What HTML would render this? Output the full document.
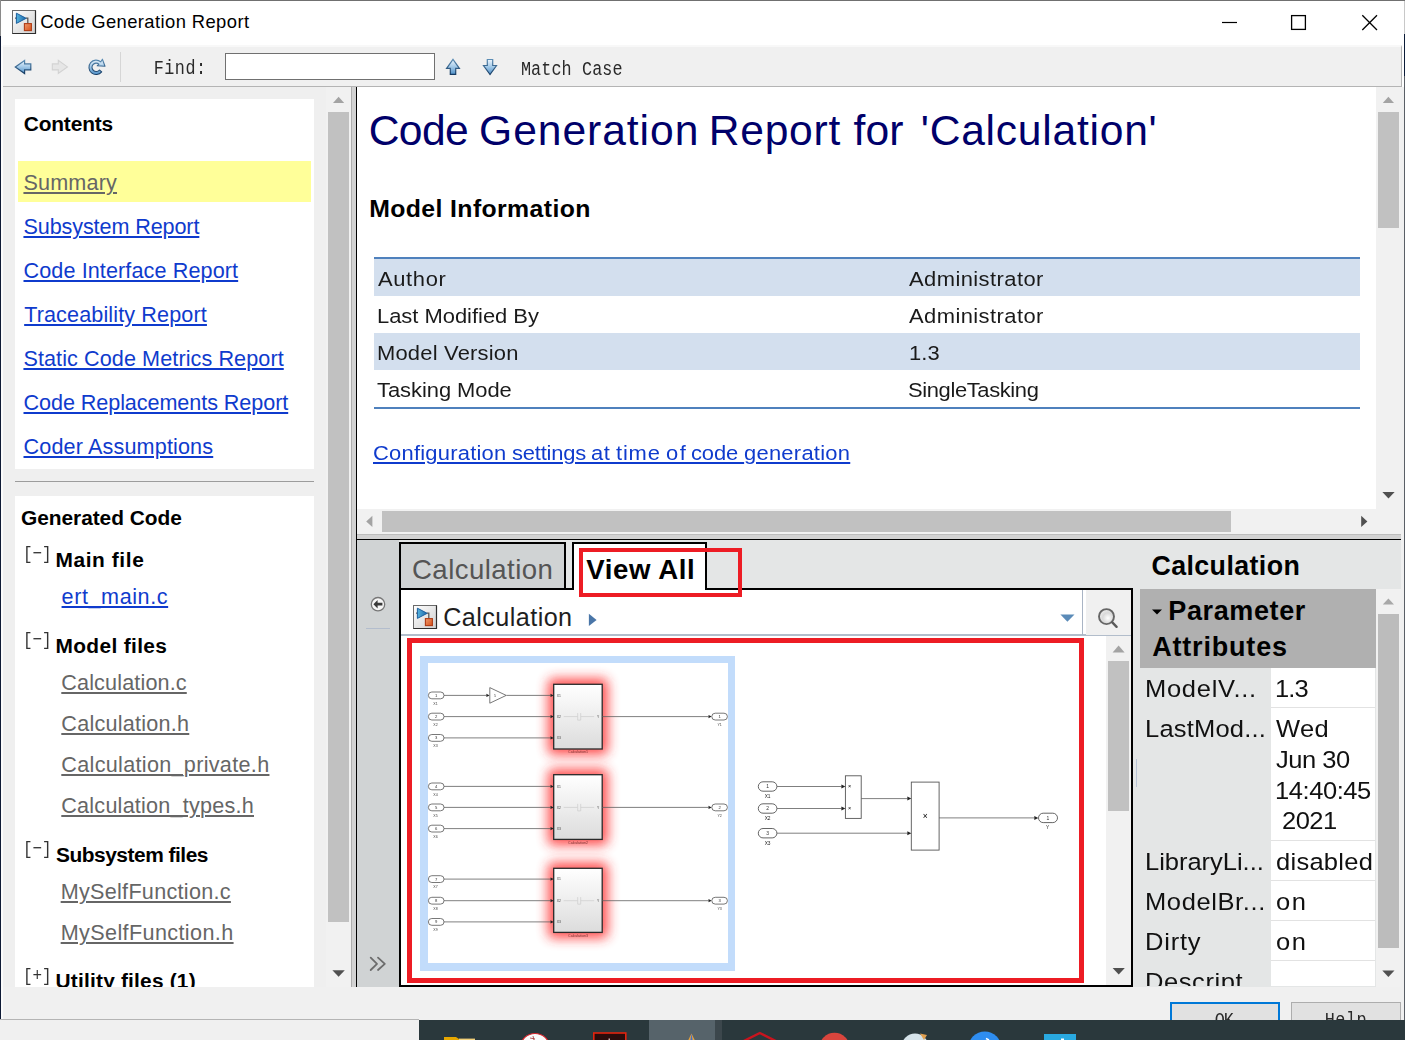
<!DOCTYPE html>
<html><head><meta charset="utf-8"><title>Code Generation Report</title>
<style>
*{box-sizing:border-box;margin:0;padding:0}
html,body{width:1405px;height:1040px;overflow:hidden;background:#f0f0f0;font-family:"Liberation Sans",sans-serif;}
.a{position:absolute}
.t{position:absolute;white-space:nowrap}
.clip{position:absolute;left:0;top:0;width:1405px;overflow:hidden}
svg{position:absolute;overflow:visible}
</style></head><body>
<!-- ===== window frame / title bar ===== -->
<div class="a" style="left:1px;top:1px;width:1403px;height:45px;background:#fff"></div>
<div class="a" style="left:0;top:0;width:1405px;height:1px;background:#707070"></div>
<div class="a" style="left:0;top:0;width:1px;height:36px;background:#8a8a8a"></div>
<div class="a" style="left:0;top:36px;width:1px;height:984px;background:#0e1a35"></div>
<div class="a" style="left:1px;top:46px;width:2px;height:973px;background:#fbfbfb"></div>
<div class="a" style="left:1401px;top:46px;width:3px;height:41px;background:#fff"></div>
<div class="a" style="left:1401px;top:87px;width:3px;height:933px;background:#f0f0f0"></div>
<div class="a" style="left:1404px;top:1px;width:1px;height:1019px;background:#5a5f66"></div>
<div class="a" style="left:1404px;top:1px;width:1px;height:33px;background:#c8c8c8"></div>
<div class="a" style="left:1404px;top:34px;width:1px;height:42px;background:#0c1c38"></div>
<svg width="0" height="0" style="left:0;top:0"><defs>
<linearGradient id="gblue" x1="0" y1="0" x2="0" y2="1"><stop offset="0" stop-color="#eef6fd"/><stop offset="0.45" stop-color="#a9cdea"/><stop offset="1" stop-color="#4f90c8"/></linearGradient>
<linearGradient id="gblueo" x1="0" y1="0" x2="0" y2="1"><stop offset="0" stop-color="#5b8db5"/><stop offset="1" stop-color="#153b63"/></linearGradient>
<linearGradient id="gicon" x1="0" y1="0" x2="1" y2="1"><stop offset="0" stop-color="#ffffff"/><stop offset="1" stop-color="#cfcfcf"/></linearGradient>
<linearGradient id="gtri" x1="0" y1="0" x2="1" y2="0"><stop offset="0" stop-color="#56b4de"/><stop offset="1" stop-color="#1c67a8"/></linearGradient>
<linearGradient id="gora" x1="0" y1="0" x2="1" y2="1"><stop offset="0" stop-color="#ee9a6c"/><stop offset="1" stop-color="#d9501a"/></linearGradient>
<linearGradient id="gblk" x1="0" y1="0" x2="0" y2="1"><stop offset="0" stop-color="#ffffff"/><stop offset="1" stop-color="#dcdcdc"/></linearGradient>
<radialGradient id="glens" cx="0.6" cy="0.6" r="0.7"><stop offset="0" stop-color="#ffffff"/><stop offset="0.5" stop-color="#d9d9d9"/><stop offset="1" stop-color="#f4f4f4"/></radialGradient>
<filter id="blur1" x="-20%" y="-20%" width="140%" height="140%"><feGaussianBlur stdDeviation="0.45"/></filter>
<filter id="blur2" x="-20%" y="-20%" width="140%" height="140%"><feGaussianBlur stdDeviation="0.6"/></filter>
<filter id="glow" x="-50%" y="-50%" width="200%" height="200%"><feGaussianBlur stdDeviation="5.6"/></filter>
</defs></svg><svg style="left:12px;top:10px" width="24" height="24" viewBox="0 0 24 24">
<rect x="0.5" y="0.5" width="23" height="23" fill="url(#gicon)" stroke="#6a6a6a"/>
<path d="M0.5 23.5H23.5V0.5" fill="none" stroke="#2e2e2e" stroke-width="1.2"/>
<path d="M3 8.2H5M14 8.2H15.8V13.5" fill="none" stroke="#5a5a5a" stroke-width="1.3"/>
<polygon points="4.4,3.2 4.4,13.4 14.2,8.3" fill="url(#gtri)" stroke="#1b5f9e" stroke-width="1" stroke-linejoin="round"/>
<rect x="12.4" y="13.6" width="7" height="7" fill="url(#gora)" stroke="#b03c16" stroke-width="1.1"/>
</svg>
<svg style="left:1215px;top:8px" width="170" height="30" viewBox="1215 8 170 30">
<path d="M1222 22.5H1237" stroke="#000" stroke-width="1.2" fill="none"/>
<rect x="1291.6" y="15.6" width="13.8" height="13.8" stroke="#000" stroke-width="1.3" fill="none"/>
<path d="M1362.3 15.3L1377 30M1377 15.3L1362.3 30" stroke="#000" stroke-width="1.3" fill="none"/>
</svg>
<!-- ===== toolbar ===== -->
<div class="a" style="left:3px;top:45px;width:1399px;height:42px;background:#f0f0f0;border-top:2px solid #f8f8f8;border-bottom:1px solid #b4b4b4;border-right:1px solid #b4b4b4"></div>
<div class="a" style="left:120px;top:52px;width:1px;height:30px;background:#d6d6d6"></div>
<div class="a" style="left:225px;top:53px;width:210px;height:27px;background:#fff;border:1px solid #707070"></div>
<svg style="left:10px;top:52px" width="500" height="30" viewBox="10 52 500 30">
<polygon points="15.3,66.9 24.6,60.4 24.6,63.9 30.8,63.9 30.8,69.9 24.6,69.9 24.6,73.5" fill="url(#gblue)" stroke="url(#gblueo)" stroke-width="1.2" stroke-linejoin="miter"/>
<polygon points="67.4,66.9 58.3,60.4 58.3,63.9 52.3,63.9 52.3,69.9 58.3,69.9 58.3,73.5" fill="#e6e6e6" stroke="#d2d2d2" stroke-width="1.1"/>
<path d="M101.7 71.9A7.2 7.2 0 1 1 100.8 61.8L102.4 59.2L105 66.2L97.2 65.8L98.9 64.1A4.2 4.2 0 1 0 99.4 70Z" fill="url(#gblue)" stroke="url(#gblueo)" stroke-width="1.1" stroke-linejoin="round"/>
<polygon points="453,59.4 459.4,68.3 455.7,68.3 455.7,74.4 450.3,74.4 450.3,68.3 446.6,68.3" fill="url(#gblue)" stroke="url(#gblueo)" stroke-width="1.2"/>
<polygon points="490,74.5 483.5,65.5 487.3,65.5 487.3,59.5 492.7,59.5 492.7,65.5 496.5,65.5" fill="url(#gblue)" stroke="url(#gblueo)" stroke-width="1.2"/>
</svg>

<!-- ===== LEFT PANE ===== -->
<div class="a" style="left:3px;top:87px;width:348px;height:900px;background:#efefef"></div>
<div class="a" style="left:15px;top:99px;width:299px;height:370px;background:#fff"></div>
<div class="a" style="left:18px;top:161px;width:293px;height:41px;background:#ffff99"></div>
<div class="a" style="left:15px;top:481px;width:299px;height:1px;background:#9c9c9c"></div>
<div class="a" style="left:15px;top:496px;width:299px;height:491px;background:#fff"></div>
<!-- left scrollbar -->
<div class="a" style="left:326px;top:87px;width:25px;height:900px;background:#f1f1f1"></div>
<div class="a" style="left:328px;top:112px;width:21px;height:810px;background:#c1c1c1"></div>
<svg style="left:326px;top:87px" width="25" height="900" viewBox="326 87 25 900">
<polygon points="333,103 338.6,96.8 344.2,103" fill="#a3a3a3"/><polygon points="332.4,970.3 344.8,970.3 338.6,976.8" fill="#505050"/></svg>

<!-- divider -->
<div class="a" style="left:351px;top:87px;width:5px;height:900px;background:#d2d2d2;border-left:1px solid #adadad"></div>
<div class="a" style="left:356px;top:87px;width:1px;height:900px;background:#000"></div>

<!-- ===== RIGHT TOP PANE ===== -->
<div class="a" style="left:357px;top:87px;width:1019px;height:422px;background:#fff"></div>
<div class="a" style="left:1376px;top:87px;width:25px;height:447px;background:#f1f1f1"></div>
<div class="a" style="left:1378px;top:112px;width:21px;height:116px;background:#c1c1c1"></div>
<div class="a" style="left:357px;top:509px;width:1019px;height:25px;background:#f1f1f1"></div>
<div class="a" style="left:382px;top:511px;width:849px;height:21px;background:#c1c1c1"></div>
<div class="a" style="left:357px;top:534px;width:1044px;height:5px;background:#d2d2d2;border-top:1px solid #bdbdbd"></div>
<div class="a" style="left:357px;top:539px;width:1044px;height:1px;background:#000"></div>
<!-- table -->
<div class="a" style="left:374px;top:257px;width:986px;height:2px;background:#4f81bd"></div>
<div class="a" style="left:374px;top:259px;width:986px;height:37px;background:#d3dfee"></div>
<div class="a" style="left:374px;top:333px;width:986px;height:37px;background:#d3dfee"></div>
<div class="a" style="left:374px;top:407px;width:986px;height:2px;background:#4f81bd"></div>
<svg style="left:357px;top:87px" width="1044" height="450" viewBox="357 87 1044 450">
<polygon points="1382.8,103 1388.4,96.8 1394,103" fill="#a3a3a3"/><polygon points="1382.4,492 1394.6,492 1388.5,498.4" fill="#505050"/>
<polygon points="372.4,515.8 372.4,527 366.2,521.4" fill="#a3a3a3"/><polygon points="1361.2,515.8 1361.2,527 1367.4,521.4" fill="#505050"/></svg>

<!-- ===== RIGHT BOTTOM PANE ===== -->
<div class="a" style="left:357px;top:540px;width:1044px;height:447px;background:#e4e6e6"></div>
<div class="a" style="left:357px;top:540px;width:42px;height:447px;background:#d0d3d4"></div>
<div class="a" style="left:366px;top:628px;width:24px;height:1px;background:#b3bdcd"></div>
<!-- tabs -->
<div class="a" style="left:399px;top:542px;width:167px;height:48px;background:#d0d3d4;border:2px solid #000"></div>
<div class="a" style="left:572px;top:542px;width:135px;height:48px;background:#fff;border:2px solid #000;border-bottom:none"></div>
<!-- main box -->
<div class="a" style="left:399px;top:588px;width:734px;height:399px;background:#fff;border:2px solid #000"></div>
<div class="a" style="left:574px;top:588px;width:131px;height:2px;background:#fff"></div>
<div class="a" style="left:401px;top:634px;width:685px;height:2px;background:#b2bdcb"></div>
<div class="a" style="left:1082px;top:590px;width:1px;height:45px;background:#a9b4c4"></div>
<div class="a" style="left:1086px;top:590px;width:45px;height:45px;background:#f0f0f0"></div>
<div class="a" style="left:1086px;top:635px;width:45px;height:1px;background:#b2bdcb"></div>
<!-- inner scrollbar -->
<div class="a" style="left:1106px;top:636px;width:25px;height:349px;background:#f1f1f1"></div>
<div class="a" style="left:1108px;top:661px;width:21px;height:150px;background:#c1c1c1"></div>
<!-- thumbnails -->
<div class="a" style="left:420px;top:656px;width:315px;height:315px;background:#fff;border:solid #c2dcfb;border-width:7px 7px 8px 8px"></div>
<svg style="left:401px;top:636px" width="705" height="349" viewBox="401 636 705 349" font-family="Liberation Sans, sans-serif"><rect x="547.7" y="678.3" width="60.5" height="76.70000000000005" rx="6" fill="#ff2a2a" opacity="0.8" filter="url(#glow)"/>
<rect x="547.7" y="768.7" width="60.5" height="76.69999999999993" rx="6" fill="#ff2a2a" opacity="0.8" filter="url(#glow)"/>
<rect x="547.7" y="862.3" width="60.5" height="76.10000000000002" rx="6" fill="#ff2a2a" opacity="0.8" filter="url(#glow)"/>
<g filter="url(#blur1)">
<rect x="428.4" y="692.0" width="15.6" height="6.8" rx="3.4" fill="#fff" stroke="#555" stroke-width="0.8"/><text x="436.2" y="696.9" font-size="4.2" text-anchor="middle" fill="#333">1</text>
<text x="435.5" y="704.6" font-size="3.6" text-anchor="middle" fill="#444">X1</text>
<path d="M444.0 695.4H486.4" stroke="#606060" stroke-width="0.8" fill="none"/><polygon points="489.6,695.4 486.4,693.8 486.4,697.0" fill="#222"/>
<polygon points="489.8,687.6 489.8,703.2 506.2,695.4" fill="#fff" stroke="#555" stroke-width="0.8"/>
<text x="495.0" y="696.7" font-size="3.6" text-anchor="middle" fill="#444">5</text>
<path d="M506.4 695.4H550.5" stroke="#606060" stroke-width="0.8" fill="none"/><polygon points="553.7,695.4 550.5,693.8 550.5,697.0" fill="#222"/>
<rect x="428.4" y="713.2" width="15.6" height="6.8" rx="3.4" fill="#fff" stroke="#555" stroke-width="0.8"/><text x="436.2" y="718.1" font-size="4.2" text-anchor="middle" fill="#333">2</text>
<text x="435.5" y="725.8" font-size="3.6" text-anchor="middle" fill="#444">X2</text>
<path d="M444.0 716.6H550.5" stroke="#606060" stroke-width="0.8" fill="none"/><polygon points="553.7,716.6 550.5,715.0 550.5,718.2" fill="#222"/>
<rect x="428.4" y="734.5" width="15.6" height="6.8" rx="3.4" fill="#fff" stroke="#555" stroke-width="0.8"/><text x="436.2" y="739.4" font-size="4.2" text-anchor="middle" fill="#333">3</text>
<text x="435.5" y="747.1" font-size="3.6" text-anchor="middle" fill="#444">X3</text>
<path d="M444.0 737.9H550.5" stroke="#606060" stroke-width="0.8" fill="none"/><polygon points="553.7,737.9 550.5,736.3 550.5,739.5" fill="#222"/>
<rect x="553.7" y="684.3" width="48.5" height="64.7" fill="url(#gblk)" stroke="#2a2a2a" stroke-width="1.3"/>
<text x="556.7" y="696.7" font-size="3.4" text-anchor="start" fill="#444">X1</text>
<text x="556.7" y="717.9" font-size="3.4" text-anchor="start" fill="#444">X2</text>
<text x="556.7" y="739.2" font-size="3.4" text-anchor="start" fill="#444">X3</text>
<text x="599.2" y="717.9" font-size="3.4" text-anchor="end" fill="#444">Y</text>
<path d="M563.7 716.6H577.7M577.7 713.1V720.1M580.7 713.1V720.1H577.7M580.7 716.6H594.2" stroke="#cfcfcf" stroke-width="0.8" fill="none"/>
<text x="578.0" y="753.4" font-size="3.6" text-anchor="middle" fill="#7a3030">Calculation1</text>
<path d="M602.2 716.6H708.5" stroke="#606060" stroke-width="0.8" fill="none"/><polygon points="711.7,716.6 708.5,715.0 708.5,718.2" fill="#222"/>
<rect x="711.8" y="713.2" width="15.6" height="6.8" rx="3.4" fill="#fff" stroke="#555" stroke-width="0.8"/><text x="719.6" y="718.1" font-size="4.2" text-anchor="middle" fill="#333">1</text>
<text x="719.6" y="725.8" font-size="3.6" text-anchor="middle" fill="#444">Y1</text>
<rect x="428.4" y="783.0" width="15.6" height="6.8" rx="3.4" fill="#fff" stroke="#555" stroke-width="0.8"/><text x="436.2" y="787.9" font-size="4.2" text-anchor="middle" fill="#333">4</text>
<text x="435.5" y="795.6" font-size="3.6" text-anchor="middle" fill="#444">X4</text>
<path d="M444.0 786.4H550.5" stroke="#606060" stroke-width="0.8" fill="none"/><polygon points="553.7,786.4 550.5,784.8 550.5,788.0" fill="#222"/>
<rect x="428.4" y="804.0" width="15.6" height="6.8" rx="3.4" fill="#fff" stroke="#555" stroke-width="0.8"/><text x="436.2" y="808.9" font-size="4.2" text-anchor="middle" fill="#333">5</text>
<text x="435.5" y="816.6" font-size="3.6" text-anchor="middle" fill="#444">X5</text>
<path d="M444.0 807.4H550.5" stroke="#606060" stroke-width="0.8" fill="none"/><polygon points="553.7,807.4 550.5,805.8 550.5,809.0" fill="#222"/>
<rect x="428.4" y="825.2" width="15.6" height="6.8" rx="3.4" fill="#fff" stroke="#555" stroke-width="0.8"/><text x="436.2" y="830.1" font-size="4.2" text-anchor="middle" fill="#333">6</text>
<text x="435.5" y="837.8" font-size="3.6" text-anchor="middle" fill="#444">X6</text>
<path d="M444.0 828.6H550.5" stroke="#606060" stroke-width="0.8" fill="none"/><polygon points="553.7,828.6 550.5,827.0 550.5,830.2" fill="#222"/>
<rect x="553.7" y="774.7" width="48.5" height="64.7" fill="url(#gblk)" stroke="#2a2a2a" stroke-width="1.3"/>
<text x="556.7" y="787.7" font-size="3.4" text-anchor="start" fill="#444">X1</text>
<text x="556.7" y="808.7" font-size="3.4" text-anchor="start" fill="#444">X2</text>
<text x="556.7" y="829.9" font-size="3.4" text-anchor="start" fill="#444">X3</text>
<text x="599.2" y="808.7" font-size="3.4" text-anchor="end" fill="#444">Y</text>
<path d="M563.7 807.4H577.7M577.7 803.9V810.9M580.7 803.9V810.9H577.7M580.7 807.4H594.2" stroke="#cfcfcf" stroke-width="0.8" fill="none"/>
<text x="578.0" y="843.8" font-size="3.6" text-anchor="middle" fill="#7a3030">Calculation2</text>
<path d="M602.2 807.4H708.5" stroke="#606060" stroke-width="0.8" fill="none"/><polygon points="711.7,807.4 708.5,805.8 708.5,809.0" fill="#222"/>
<rect x="711.8" y="804.0" width="15.6" height="6.8" rx="3.4" fill="#fff" stroke="#555" stroke-width="0.8"/><text x="719.6" y="808.9" font-size="4.2" text-anchor="middle" fill="#333">2</text>
<text x="719.6" y="816.6" font-size="3.6" text-anchor="middle" fill="#444">Y2</text>
<rect x="428.4" y="875.7" width="15.6" height="6.8" rx="3.4" fill="#fff" stroke="#555" stroke-width="0.8"/><text x="436.2" y="880.6" font-size="4.2" text-anchor="middle" fill="#333">7</text>
<text x="435.5" y="888.3" font-size="3.6" text-anchor="middle" fill="#444">X7</text>
<path d="M444.0 879.1H550.5" stroke="#606060" stroke-width="0.8" fill="none"/><polygon points="553.7,879.1 550.5,877.5 550.5,880.7" fill="#222"/>
<rect x="428.4" y="897.3" width="15.6" height="6.8" rx="3.4" fill="#fff" stroke="#555" stroke-width="0.8"/><text x="436.2" y="902.2" font-size="4.2" text-anchor="middle" fill="#333">8</text>
<text x="435.5" y="909.9" font-size="3.6" text-anchor="middle" fill="#444">X8</text>
<path d="M444.0 900.7H550.5" stroke="#606060" stroke-width="0.8" fill="none"/><polygon points="553.7,900.7 550.5,899.1 550.5,902.3" fill="#222"/>
<rect x="428.4" y="918.5" width="15.6" height="6.8" rx="3.4" fill="#fff" stroke="#555" stroke-width="0.8"/><text x="436.2" y="923.4" font-size="4.2" text-anchor="middle" fill="#333">9</text>
<text x="435.5" y="931.1" font-size="3.6" text-anchor="middle" fill="#444">X9</text>
<path d="M444.0 921.9H550.5" stroke="#606060" stroke-width="0.8" fill="none"/><polygon points="553.7,921.9 550.5,920.3 550.5,923.5" fill="#222"/>
<rect x="553.7" y="868.3" width="48.5" height="64.1" fill="url(#gblk)" stroke="#2a2a2a" stroke-width="1.3"/>
<text x="556.7" y="880.4" font-size="3.4" text-anchor="start" fill="#444">X1</text>
<text x="556.7" y="902.0" font-size="3.4" text-anchor="start" fill="#444">X2</text>
<text x="556.7" y="923.2" font-size="3.4" text-anchor="start" fill="#444">X3</text>
<text x="599.2" y="902.0" font-size="3.4" text-anchor="end" fill="#444">Y</text>
<path d="M563.7 900.7H577.7M577.7 897.2V904.2M580.7 897.2V904.2H577.7M580.7 900.7H594.2" stroke="#cfcfcf" stroke-width="0.8" fill="none"/>
<text x="578.0" y="936.8" font-size="3.6" text-anchor="middle" fill="#7a3030">Calculation3</text>
<path d="M602.2 900.7H708.5" stroke="#606060" stroke-width="0.8" fill="none"/><polygon points="711.7,900.7 708.5,899.1 708.5,902.3" fill="#222"/>
<rect x="711.8" y="897.3" width="15.6" height="6.8" rx="3.4" fill="#fff" stroke="#555" stroke-width="0.8"/><text x="719.6" y="902.2" font-size="4.2" text-anchor="middle" fill="#333">3</text>
<text x="719.6" y="909.9" font-size="3.6" text-anchor="middle" fill="#444">Y3</text>
</g><g filter="url(#blur1)">
<rect x="758.3" y="781.8" width="18.6" height="9.4" rx="4.7" fill="#fff" stroke="#555" stroke-width="0.9"/><text x="767.6" y="788.3" font-size="5" text-anchor="middle" fill="#333">1</text>
<text x="767.6" y="797.9" font-size="4.8" text-anchor="middle" fill="#222">X1</text>
<rect x="758.3" y="803.8" width="18.6" height="9.4" rx="4.7" fill="#fff" stroke="#555" stroke-width="0.9"/><text x="767.6" y="810.3" font-size="5" text-anchor="middle" fill="#333">2</text>
<text x="767.6" y="819.9" font-size="4.8" text-anchor="middle" fill="#222">X2</text>
<rect x="758.3" y="828.5" width="18.6" height="9.4" rx="4.7" fill="#fff" stroke="#555" stroke-width="0.9"/><text x="767.6" y="835.0" font-size="5" text-anchor="middle" fill="#333">3</text>
<text x="767.6" y="844.6" font-size="4.8" text-anchor="middle" fill="#222">X3</text>
<rect x="845.4" y="775.8" width="15.8" height="42.6" fill="#fff" stroke="#555" stroke-width="0.9"/>
<rect x="911.3" y="782.1" width="27.8" height="68" fill="#fff" stroke="#555" stroke-width="0.9"/>
<path d="M777.0 786.5H841.4" stroke="#606060" stroke-width="0.8" fill="none"/><polygon points="845.4,786.5 841.4,784.5 841.4,788.5" fill="#222"/>
<path d="M777.0 808.5H841.4" stroke="#606060" stroke-width="0.8" fill="none"/><polygon points="845.4,808.5 841.4,806.5 841.4,810.5" fill="#222"/>
<text x="849.7" y="788.3" font-size="5.5" text-anchor="middle" fill="#000">×</text>
<text x="849.7" y="810.3" font-size="5.5" text-anchor="middle" fill="#000">×</text>
<path d="M861.2 798.6H907.3" stroke="#606060" stroke-width="0.8" fill="none"/><polygon points="911.3,798.6 907.3,796.6 907.3,800.6" fill="#222"/>
<path d="M777.0 833.2H907.3" stroke="#606060" stroke-width="0.8" fill="none"/><polygon points="911.3,833.2 907.3,831.2 907.3,835.2" fill="#222"/>
<text x="925.2" y="819.2" font-size="8.5" text-anchor="middle" fill="#000">×</text>
<path d="M939.1 817.9H1034.3" stroke="#606060" stroke-width="0.8" fill="none"/><polygon points="1038.3,817.9 1034.3,815.9 1034.3,819.9" fill="#222"/>
<rect x="1038.5" y="813.2" width="19" height="9.4" rx="4.7" fill="#fff" stroke="#555" stroke-width="0.9"/><text x="1048.0" y="819.7" font-size="5" text-anchor="middle" fill="#333">1</text>
<text x="1047.5" y="829.2" font-size="4.8" text-anchor="middle" fill="#222">Y</text>
</g></svg>
<!-- red annotations -->
<div class="a" style="left:407px;top:638px;width:677px;height:345px;border:5px solid #ed1c24"></div>
<div class="a" style="left:579px;top:548px;width:163px;height:49px;border:4px solid #ed1c24"></div>
<!-- property panel -->
<div class="a" style="left:1140px;top:589px;width:236px;height:79px;background:#b0b0b0"></div>
<div class="clip" style="height:986px">
<div class="a" style="left:1140px;top:668px;width:131px;height:330px;background:#e4e6e6"></div>
<div class="a" style="left:1271px;top:668px;width:104px;height:330px;background:#fff"></div>
<div class="a" style="left:1271px;top:707px;width:104px;height:1px;background:#e2e2e2"></div>
<div class="a" style="left:1271px;top:840px;width:104px;height:1px;background:#e2e2e2"></div>
<div class="a" style="left:1271px;top:880px;width:104px;height:1px;background:#e2e2e2"></div>
<div class="a" style="left:1271px;top:920px;width:104px;height:1px;background:#e2e2e2"></div>
<div class="a" style="left:1271px;top:960px;width:104px;height:1px;background:#e2e2e2"></div>
<div class="t" style="font-size:24.3px;line-height:24.3px;color:#111;letter-spacing:0.555px;top:969.60px;left:1144.60px;transform:scaleX(1.05);transform-origin:0 0;">Descript...</div>
</div>
<div class="a" style="left:1376px;top:589px;width:25px;height:398px;background:#f1f1f1"></div>
<div class="a" style="left:1378px;top:614px;width:21px;height:334px;background:#bcbcbc"></div>
<div class="a" style="left:1136px;top:759px;width:1px;height:28px;background:#b9c4d6"></div>
<svg style="left:357px;top:540px" width="1044" height="447" viewBox="357 540 1044 447">
<circle cx="378" cy="604.2" r="6.7" fill="#f6f6f6" stroke="#777" stroke-width="1.3"/>
<path d="M373.4 604.2L377.6 600V602.8H382.4V605.6H377.6V608.4Z" fill="#3a3a3a"/>
<path d="M370.7 957.6L377 963.8L370.7 970M378 957.6L384.8 963.8L378 970" fill="none" stroke="#6c6c6c" stroke-width="1.8" stroke-linecap="round" stroke-linejoin="round"/>
<polygon points="588.9,613.8 588.9,626 596.6,619.9" fill="#4a76a8"/>
<polygon points="1060.4,614.6 1074.5,614.6 1067.4,621.8" fill="#5b8bb8"/>
<circle cx="1106.5" cy="616.6" r="7.5" fill="url(#glens)" stroke="#666" stroke-width="1.9"/>
<path d="M1112.3 622.4L1116.6 626.8" stroke="#5a5a5a" stroke-width="2.4" stroke-linecap="round"/>
<polygon points="1112.6,652.4 1118.6,645.6 1124.6,652.4" fill="#a3a3a3"/><polygon points="1112.6,968 1124.8,968 1118.7,974.6" fill="#505050"/>
<polygon points="1382.8,604.6 1388.4,598.4 1394,604.6" fill="#a8a8a8"/><polygon points="1382.3,970.6 1394.5,970.6 1388.4,977" fill="#505050"/>
<polygon points="1152,609.6 1162,609.6 1157,614.6" fill="#000"/>
</svg><svg style="left:413px;top:605px" width="24" height="24" viewBox="0 0 24 24">
<rect x="0.5" y="0.5" width="23" height="23" fill="url(#gicon)" stroke="#6a6a6a"/>
<path d="M0.5 23.5H23.5V0.5" fill="none" stroke="#2e2e2e" stroke-width="1.2"/>
<path d="M3 8.2H5M14 8.2H15.8V13.5" fill="none" stroke="#5a5a5a" stroke-width="1.3"/>
<polygon points="4.4,3.2 4.4,13.4 14.2,8.3" fill="url(#gtri)" stroke="#1b5f9e" stroke-width="1" stroke-linejoin="round"/>
<rect x="12.4" y="13.6" width="7" height="7" fill="url(#gora)" stroke="#b03c16" stroke-width="1.1"/>
</svg>

<!-- ===== bottom strip ===== -->
<div class="a" style="left:3px;top:987px;width:1398px;height:33px;background:#f0f0f0"></div>
<div class="clip" style="height:1020px">
<div class="a" style="left:1170px;top:1002px;width:110px;height:40px;background:#e1e1e1;border:2px solid #0078d7"></div>
<div class="a" style="left:1291px;top:1002px;width:110px;height:40px;background:#e1e1e1;border:1px solid #adadad"></div>
<div class="t" style="font-size:16.8px;line-height:16.8px;color:#2a2a2a;font-family:'Liberation Mono',monospace;letter-spacing:-0.937px;top:1014.00px;left:1214.64px;transform:scaleY(1.22);transform-origin:0 12.00px;">OK</div>
<div class="t" style="font-size:16.8px;line-height:16.8px;color:#2a2a2a;font-family:'Liberation Mono',monospace;letter-spacing:0.551px;top:1014.00px;left:1324.71px;transform:scaleY(1.22);transform-origin:0 12.00px;">Help</div>
</div>
<div class="a" style="left:0px;top:1019px;width:419px;height:21px;background:#f0f0f0;border-top:1px solid #b4b4b4"></div>
<div class="a" style="left:419px;top:1020px;width:986px;height:20px;background:#2a383c"></div>
<svg style="left:419px;top:1020px;overflow:hidden" width="986" height="20" viewBox="419 1020 986 20">
<rect x="649" y="1020" width="66" height="20" fill="#56636a"/><rect x="715" y="1020" width="7" height="20" fill="#3c474c"/>
<path d="M444 1037h12l3 2h16v8h-31z" fill="#e6a700"/><path d="M459 1038.6h16v6h-16z" fill="#f3d27a"/>
<ellipse cx="535" cy="1046" rx="14" ry="12.5" fill="#fbfbfb" stroke="#d8232a" stroke-width="1.2"/>
<path d="M533 1036l1 4M530 1038l5 1" stroke="#a33" stroke-width="0.8"/>
<rect x="593.8" y="1033" width="32" height="20" fill="#2a0c0c" stroke="#e2230e" stroke-width="1.6"/>
<rect x="608.5" y="1038.5" width="1.5" height="3" fill="#caa"/>
<path d="M691.5 1033.6l3.5 7h-7z" fill="#e8a23a"/><path d="M691.5 1033.6l1.2 7h-2.4z" fill="#3a6fd0"/>
<path d="M759.8 1033l16 8v12h-32v-12z" fill="none" stroke="#c8141e" stroke-width="2.4"/>
<circle cx="834.5" cy="1048" r="15.2" fill="#d9453d"/>
<circle cx="915" cy="1047" r="13.5" fill="#d5e3ea"/><path d="M920 1033.5l7 1.5-3 5z" fill="#e0a050"/>
<circle cx="984.8" cy="1048" r="16.5" fill="#2e8df0"/><path d="M986 1038.5l3 1.5" stroke="#fff" stroke-width="1.4"/>
<rect x="1044" y="1034" width="32" height="10" fill="#29a9e0"/><rect x="1061" y="1038.5" width="3" height="2" fill="#fff"/>
</svg>

<!-- ===== TEXT ===== -->
<div class="t" style="font-size:18.4px;line-height:18.4px;color:#000;letter-spacing:0.406px;top:13.00px;left:40.14px;">Code Generation Report</div>
<div class="t" style="font-size:16.8px;line-height:16.8px;color:#2a2a2a;font-family:'Liberation Mono',monospace;letter-spacing:0.447px;top:62.30px;left:153.83px;transform:scaleY(1.22);transform-origin:0 12.00px;">Find:</div>
<div class="t" style="font-size:16.8px;line-height:16.8px;color:#2a2a2a;font-family:'Liberation Mono',monospace;letter-spacing:0.100px;top:62.50px;left:520.94px;transform:scaleY(1.22);transform-origin:0 12.00px;">Match Case</div>
<div class="t" style="font-size:20.9px;line-height:20.9px;color:#000;font-weight:bold;letter-spacing:-0.142px;top:114.30px;left:23.69px;">Contents</div>
<div class="t" style="font-size:21.6px;line-height:21.6px;color:#666;text-decoration:underline;text-decoration-thickness:2px;text-underline-offset:1.7px;letter-spacing:0.169px;top:172.20px;left:23.44px;">Summary</div>
<div class="t" style="font-size:21.6px;line-height:21.6px;color:#0f3bcd;text-decoration:underline;text-decoration-thickness:2px;text-underline-offset:1.7px;letter-spacing:-0.110px;top:216.00px;left:23.44px;">Subsystem Report</div>
<div class="t" style="font-size:21.6px;line-height:21.6px;color:#0f3bcd;text-decoration:underline;text-decoration-thickness:2px;text-underline-offset:1.7px;letter-spacing:0.104px;top:260.00px;left:23.51px;">Code Interface Report</div>
<div class="t" style="font-size:21.6px;line-height:21.6px;color:#0f3bcd;text-decoration:underline;text-decoration-thickness:2px;text-underline-offset:1.7px;letter-spacing:0.124px;top:304.00px;left:24.17px;">Traceability Report</div>
<div class="t" style="font-size:21.6px;line-height:21.6px;color:#0f3bcd;text-decoration:underline;text-decoration-thickness:2px;text-underline-offset:1.7px;letter-spacing:0.088px;top:348.00px;left:23.44px;">Static Code Metrics Report</div>
<div class="t" style="font-size:21.6px;line-height:21.6px;color:#0f3bcd;text-decoration:underline;text-decoration-thickness:2px;text-underline-offset:1.7px;letter-spacing:-0.074px;top:392.00px;left:23.51px;">Code Replacements Report</div>
<div class="t" style="font-size:21.6px;line-height:21.6px;color:#0f3bcd;text-decoration:underline;text-decoration-thickness:2px;text-underline-offset:1.7px;letter-spacing:0.146px;top:436.00px;left:23.51px;">Coder Assumptions</div>
<div class="t" style="font-size:20.9px;line-height:20.9px;color:#000;font-weight:bold;letter-spacing:-0.046px;top:508.20px;left:20.99px;">Generated Code</div>
<div class="t" style="font-size:20.9px;line-height:20.9px;color:#000;font-weight:bold;letter-spacing:0.596px;top:549.90px;left:55.44px;">Main file</div>
<div class="t" style="font-size:21.6px;line-height:21.6px;color:#0f3bcd;text-decoration:underline;text-decoration-thickness:2px;text-underline-offset:1.7px;letter-spacing:0.577px;top:586.00px;left:61.57px;">ert_main.c</div>
<div class="t" style="font-size:20.9px;line-height:20.9px;color:#000;font-weight:bold;letter-spacing:0.358px;top:635.80px;left:55.44px;">Model files</div>
<div class="t" style="font-size:21.6px;line-height:21.6px;color:#666;text-decoration:underline;text-decoration-thickness:2px;text-underline-offset:1.7px;letter-spacing:0.141px;top:672.20px;left:61.31px;">Calculation.c</div>
<div class="t" style="font-size:21.6px;line-height:21.6px;color:#666;text-decoration:underline;text-decoration-thickness:2px;text-underline-offset:1.7px;letter-spacing:0.240px;top:713.20px;left:61.31px;">Calculation.h</div>
<div class="t" style="font-size:21.6px;line-height:21.6px;color:#666;text-decoration:underline;text-decoration-thickness:2px;text-underline-offset:1.7px;letter-spacing:0.309px;top:754.10px;left:61.31px;">Calculation_private.h</div>
<div class="t" style="font-size:21.6px;line-height:21.6px;color:#666;text-decoration:underline;text-decoration-thickness:2px;text-underline-offset:1.7px;letter-spacing:0.223px;top:795.00px;left:61.31px;">Calculation_types.h</div>
<div class="t" style="font-size:20.9px;line-height:20.9px;color:#000;font-weight:bold;letter-spacing:-0.475px;top:844.80px;left:56.06px;">Subsystem files</div>
<div class="t" style="font-size:21.6px;line-height:21.6px;color:#666;text-decoration:underline;text-decoration-thickness:2px;text-underline-offset:1.7px;letter-spacing:0.289px;top:881.10px;left:60.67px;">MySelfFunction.c</div>
<div class="t" style="font-size:21.6px;line-height:21.6px;color:#666;text-decoration:underline;text-decoration-thickness:2px;text-underline-offset:1.7px;letter-spacing:0.381px;top:921.90px;left:60.67px;">MySelfFunction.h</div>
<div class="t" style="font-size:18.5px;line-height:18.5px;color:#333;font-family:'Liberation Mono',monospace;top:545.60px;left:22.64px;transform:scaleX(0.8612);transform-origin:0 0;">[−]</div>
<div class="t" style="font-size:18.5px;line-height:18.5px;color:#333;font-family:'Liberation Mono',monospace;top:631.50px;left:22.64px;transform:scaleX(0.8612);transform-origin:0 0;">[−]</div>
<div class="t" style="font-size:18.5px;line-height:18.5px;color:#333;font-family:'Liberation Mono',monospace;top:840.60px;left:22.64px;transform:scaleX(0.8612);transform-origin:0 0;">[−]</div>
<div><span class="t" style="font-size:42.6px;line-height:42.6px;color:#00006a;letter-spacing:-0.594px;top:108.60px;left:368.67px;">Code </span>
<span class="t" style="font-size:42.6px;line-height:42.6px;color:#00006a;letter-spacing:0.951px;top:108.60px;left:479.07px;">Generation </span>
<span class="t" style="font-size:42.6px;line-height:42.6px;color:#00006a;letter-spacing:0.712px;top:108.60px;left:708.84px;">Report </span>
<span class="t" style="font-size:42.6px;line-height:42.6px;color:#00006a;letter-spacing:0.048px;top:108.60px;left:853.62px;">for </span>
<span class="t" style="font-size:42.6px;line-height:42.6px;color:#00006a;letter-spacing:0.748px;top:108.60px;left:920.77px;">&#x27;Calculation&#x27;</span></div>
<div class="t" style="font-size:24.8px;line-height:24.8px;color:#000;font-weight:bold;letter-spacing:0.393px;top:196.50px;left:369.19px;">Model Information</div>
<div class="t" style="font-size:20.5px;line-height:20.5px;color:#1a1a1a;letter-spacing:0.586px;top:269.20px;left:377.67px;transform:scaleX(1.07);transform-origin:0 0;">Author</div>
<div class="t" style="font-size:20.5px;line-height:20.5px;color:#1a1a1a;letter-spacing:-0.016px;top:306.20px;left:377.44px;transform:scaleX(1.07);transform-origin:0 0;">Last Modified By</div>
<div class="t" style="font-size:20.5px;line-height:20.5px;color:#1a1a1a;letter-spacing:0.188px;top:343.20px;left:377.44px;transform:scaleX(1.07);transform-origin:0 0;">Model Version</div>
<div class="t" style="font-size:20.5px;line-height:20.5px;color:#1a1a1a;letter-spacing:-0.045px;top:380.10px;left:377.45px;transform:scaleX(1.07);transform-origin:0 0;">Tasking Mode</div>
<div class="t" style="font-size:20.5px;line-height:20.5px;color:#1a1a1a;letter-spacing:0.399px;top:269.20px;left:908.77px;transform:scaleX(1.07);transform-origin:0 0;">Administrator</div>
<div class="t" style="font-size:20.5px;line-height:20.5px;color:#1a1a1a;letter-spacing:0.399px;top:306.20px;left:908.77px;transform:scaleX(1.07);transform-origin:0 0;">Administrator</div>
<div class="t" style="font-size:20.5px;line-height:20.5px;color:#1a1a1a;letter-spacing:0.045px;top:343.20px;left:909.06px;transform:scaleX(1.07);transform-origin:0 0;">1.3</div>
<div class="t" style="font-size:20.5px;line-height:20.5px;color:#1a1a1a;letter-spacing:-0.350px;top:380.10px;left:908.39px;transform:scaleX(1.07);transform-origin:0 0;">SingleTasking</div>
<div><span class="t" style="font-size:20.5px;line-height:20.5px;color:#0f3bcd;letter-spacing:0.214px;top:443.20px;left:372.76px;transform:scaleX(1.07);transform-origin:0 0;white-space:pre;text-decoration:underline;text-decoration-thickness:2px;text-underline-offset:1.7px;word-spacing:-0.38px;">Configuration </span>
<span class="t" style="font-size:20.5px;line-height:20.5px;color:#0f3bcd;letter-spacing:-0.173px;top:443.20px;left:511.51px;transform:scaleX(1.07);transform-origin:0 0;white-space:pre;text-decoration:underline;text-decoration-thickness:2px;text-underline-offset:1.7px;word-spacing:0.12px;">settings </span>
<span class="t" style="font-size:20.5px;line-height:20.5px;color:#0f3bcd;letter-spacing:0.528px;top:443.20px;left:591.04px;transform:scaleX(1.07);transform-origin:0 0;white-space:pre;text-decoration:underline;text-decoration-thickness:2px;text-underline-offset:1.7px;word-spacing:-0.16px;">at </span>
<span class="t" style="font-size:20.5px;line-height:20.5px;color:#0f3bcd;letter-spacing:0.769px;top:443.20px;left:616.32px;transform:scaleX(1.07);transform-origin:0 0;white-space:pre;text-decoration:underline;text-decoration-thickness:2px;text-underline-offset:1.7px;word-spacing:-1.21px;">time </span>
<span class="t" style="font-size:20.5px;line-height:20.5px;color:#0f3bcd;letter-spacing:1.400px;top:443.20px;left:666.04px;transform:scaleX(1.07);transform-origin:0 0;white-space:pre;text-decoration:underline;text-decoration-thickness:2px;text-underline-offset:1.7px;word-spacing:-2.77px;">of </span>
<span class="t" style="font-size:20.5px;line-height:20.5px;color:#0f3bcd;letter-spacing:-0.118px;top:443.20px;left:691.34px;transform:scaleX(1.07);transform-origin:0 0;white-space:pre;text-decoration:underline;text-decoration-thickness:2px;text-underline-offset:1.7px;word-spacing:0.09px;">code </span>
<span class="t" style="font-size:20.5px;line-height:20.5px;color:#0f3bcd;letter-spacing:0.241px;top:443.20px;left:743.84px;transform:scaleX(1.07);transform-origin:0 0;white-space:pre;text-decoration:underline;text-decoration-thickness:2px;text-underline-offset:1.7px;">generation</span></div>
<div class="t" style="font-size:27.6px;line-height:27.6px;color:#555;letter-spacing:0.435px;top:555.60px;left:412.01px;">Calculation</div>
<div class="t" style="font-size:27.6px;line-height:27.6px;color:#000;font-weight:bold;letter-spacing:0.578px;top:555.60px;left:586.27px;">View All</div>
<div class="t" style="font-size:25.2px;line-height:25.2px;color:#1e1e1e;letter-spacing:0.427px;top:604.60px;left:443.24px;">Calculation</div>
<div class="t" style="font-size:26.8px;line-height:26.8px;color:#000;font-weight:bold;letter-spacing:0.403px;top:553.20px;left:1151.41px;">Calculation</div>
<div class="t" style="font-size:27px;line-height:27px;color:#000;font-weight:bold;letter-spacing:0.621px;top:598.30px;left:1168.27px;">Parameter</div>
<div class="t" style="font-size:27px;line-height:27px;color:#000;font-weight:bold;letter-spacing:0.805px;top:633.50px;left:1152.23px;">Attributes</div>
<div class="t" style="font-size:24.3px;line-height:24.3px;color:#111;letter-spacing:0.683px;top:676.60px;left:1144.90px;transform:scaleX(1.05);transform-origin:0 0;">ModelV...</div>
<div class="t" style="font-size:24.3px;line-height:24.3px;color:#111;letter-spacing:-0.897px;top:676.60px;left:1275.14px;transform:scaleX(1.05);transform-origin:0 0;">1.3</div>
<div class="t" style="font-size:24.3px;line-height:24.3px;color:#111;letter-spacing:0.178px;top:717.00px;left:1144.60px;transform:scaleX(1.05);transform-origin:0 0;">LastMod...</div>
<div class="t" style="font-size:24.3px;line-height:24.3px;color:#111;letter-spacing:0.360px;top:717.00px;left:1276.37px;transform:scaleX(1.05);transform-origin:0 0;">Wed</div>
<div class="t" style="font-size:24.3px;line-height:24.3px;color:#111;letter-spacing:-0.479px;top:747.80px;left:1275.96px;transform:scaleX(1.05);transform-origin:0 0;">Jun 30</div>
<div class="t" style="font-size:24.3px;line-height:24.3px;color:#111;letter-spacing:-0.414px;top:779.00px;left:1274.74px;transform:scaleX(1.05);transform-origin:0 0;">14:40:45</div>
<div class="t" style="font-size:24.3px;line-height:24.3px;color:#111;letter-spacing:-0.500px;top:809.30px;left:1282.26px;transform:scaleX(1.05);transform-origin:0 0;">2021</div>
<div class="t" style="font-size:24.3px;line-height:24.3px;color:#111;letter-spacing:-0.027px;top:849.70px;left:1144.60px;transform:scaleX(1.05);transform-origin:0 0;">LibraryLi...</div>
<div class="t" style="font-size:24.3px;line-height:24.3px;color:#111;letter-spacing:0.253px;top:849.70px;left:1275.52px;transform:scaleX(1.05);transform-origin:0 0;">disabled</div>
<div class="t" style="font-size:24.3px;line-height:24.3px;color:#111;letter-spacing:0.570px;top:889.80px;left:1144.60px;transform:scaleX(1.05);transform-origin:0 0;">ModelBr...</div>
<div class="t" style="font-size:24.3px;line-height:24.3px;color:#111;letter-spacing:1.400px;top:889.80px;left:1275.52px;transform:scaleX(1.05);transform-origin:0 0;">on</div>
<div class="t" style="font-size:24.3px;line-height:24.3px;color:#111;letter-spacing:0.740px;top:929.60px;left:1144.60px;transform:scaleX(1.05);transform-origin:0 0;">Dirty</div>
<div class="t" style="font-size:24.3px;line-height:24.3px;color:#111;letter-spacing:1.400px;top:929.60px;left:1275.52px;transform:scaleX(1.05);transform-origin:0 0;">on</div>
<div class="clip" style="height:987px">
<div class="t" style="font-size:20.9px;line-height:20.9px;color:#000;font-weight:bold;letter-spacing:0.192px;top:971.00px;left:55.58px;">Utility files (1)</div>
<div class="t" style="font-size:18.5px;line-height:18.5px;color:#333;font-family:'Liberation Mono',monospace;top:967.60px;left:22.64px;transform:scaleX(0.8612);transform-origin:0 0;">[+]</div>
</div>
</body></html>
